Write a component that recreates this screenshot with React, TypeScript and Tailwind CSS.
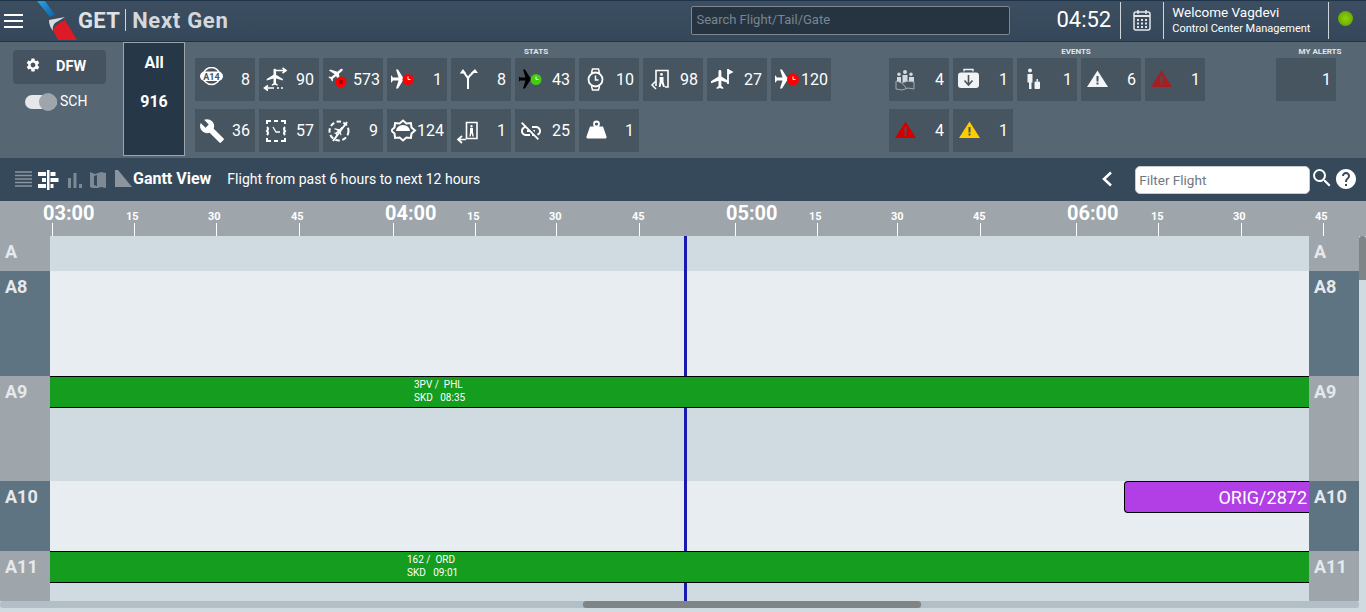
import type { ReactNode } from 'react';
import { MdBuild, MdLinkOff, MdSearch, MdSettings, MdHelp } from 'react-icons/md';

const PLANE = 'M21 16v-2l-8-5V3.500c0-.83-.67-1.500-1.500-1.500S10 2.670 10 3.500V9l-8 5v2l8-2.500V19l-2 1.500V22l3.500-1 3.500 1v-1.500L13 19v-5.500l8 2.500z';

const Svg = ({ children, size = 26 }: { children: ReactNode; size?: number }) => (
  <svg width={size} height={size} viewBox="0 0 26 26" className="shrink-0">
    {children}
  </svg>
);

const Plane = ({ rotate, fill = '#fff', x = 0, y = 0, s = 1 }: { rotate: number; fill?: string; x?: number; y?: number; s?: number }) => (
  <g transform={`translate(${x} ${y}) scale(${s}) rotate(${rotate} 12 12)`}>
    <path d={PLANE} fill={fill} />
  </g>
);

const ClockBadge = ({ color, cx, cy, r = 5.5 }: { color: string; cx: number; cy: number; r?: number }) => (
  <g>
    <circle cx={cx} cy={cy} r={r} fill={color} />
    <path d={`M${cx} ${cy - 3}v3h2.500`} stroke="#fff" strokeWidth="1" fill="none" />
  </g>
);

const Triangle = ({ color }: { color: string }) => (
  <Svg>
    <path d="M12.500 3.500 L23 20 H2 Z" fill={color} />
    <rect x="11.500" y="9" width="2" height="5.500" fill="#46555f" />
    <rect x="11.500" y="15.500" width="2" height="2" fill="#46555f" />
  </Svg>
);

const statIcons: Record<string, ReactNode> = {
  a14: (
    <Svg>
      <circle cx="12.500" cy="9" r="8.500" fill="none" stroke="#fff" strokeWidth="1.600" />
      <rect x="1" y="4.500" width="23" height="9.500" rx="4.700" fill="#fff" />
      <text x="12.500" y="12.700" textAnchor="middle" fontSize="9" fontWeight="700" fill="#46555f" fontFamily="Roboto, sans-serif">A14</text>
    </Svg>
  ),
  swap: (
    <Svg>
      <Plane rotate={0} s={0.85} x={2} y={0} />
      <path d="M13 3.500h9M19.500 1l3.500 2.500L19.500 6M11 21H2M5 18.500L1.500 21 5 23.500" stroke="#fff" strokeWidth="1.600" fill="none" />
      <path d="M14 21h2M18 21h2" stroke="#fff" strokeWidth="1.600" />
    </Svg>
  ),
  cancel: (
    <Svg>
      <Plane rotate={50} s={0.8} x={0} y={-2} />
      <circle cx="14" cy="15" r="5.500" fill="#ff0000" />
      <path d="M12.300 13.300l3.400 3.400M15.700 13.300l-3.400 3.400" stroke="#8a0000" strokeWidth="1.300" />
    </Svg>
  ),
  late: (
    <Svg>
      <Plane rotate={90} x={-3} y={0.5} />
      <ClockBadge color="#ff0000" cx={17} cy={12.5} />
    </Svg>
  ),
  fork: (
    <Svg>
      <path d="M13 22V12Q13 10.500 11.500 9L9 5.500M13 12Q13 10.500 15 8.500L18.500 5" stroke="#fff" strokeWidth="2" fill="none" />
      <path d="M8 2L4.800 6.500h6.500zM20 2l-4 4h7z" fill="#fff" />
    </Svg>
  ),
  onTime: (
    <Svg>
      <Plane rotate={90} x={-4} y={0.5} fill="#000" />
      <ClockBadge color="#44cc11" cx={17} cy={12.5} />
    </Svg>
  ),
  watch: (
    <Svg>
      <circle cx="12.500" cy="12.500" r="7" fill="none" stroke="#fff" strokeWidth="1.800" />
      <path d="M12.500 8.500v4.500h3M8.500 6l1-4h6l1 4M8.500 19l1 4h6l1-4" stroke="#fff" strokeWidth="1.500" fill="none" />
    </Svg>
  ),
  doorIn: (
    <Svg>
      <path d="M9 19V3.500h12V20h-3" stroke="#fff" strokeWidth="1.600" fill="none" />
      <path d="M14.500 6a1.400 1.400 0 110 2.800 1.400 1.400 0 010-2.800zM12.500 10h4v5l1.500 5h-1.800l-1.700-4-1 4h-1.800l1-6z" fill="#fff" />
      <path d="M9 14l-4 4 4 4" stroke="#fff" strokeWidth="1.500" fill="none" />
    </Svg>
  ),
  flag: (
    <Svg>
      <Plane rotate={0} s={0.95} x={-2} y={1} />
      <path d="M17 2v15" stroke="#fff" strokeWidth="1.800" />
      <path d="M17 2l5.500 3L17 8z" fill="#fff" />
    </Svg>
  ),
  late2: (
    <Svg>
      <Plane rotate={90} x={-3} y={0.5} />
      <ClockBadge color="#ff0000" cx={18} cy={12.5} r={6} />
    </Svg>
  ),
  dashClock: (
    <Svg>
      <path d="M4 6V3h4M18 3h4v3M4 20v3h4M18 23h4v-3M11 3h4M11 23h4M4 9q2 2 0 4q2 2 0 4M22 9q-2 2 0 4q-2 2 0 4" fill="none" stroke="#fff" strokeWidth="2" />
      <path d="M10 9l3 5h4" stroke="#fff" strokeWidth="1.300" fill="none" />
    </Svg>
  ),
  noPlane: (
    <Svg>
      <circle cx="12" cy="13" r="9.500" fill="none" stroke="#fff" strokeWidth="2" strokeDasharray="4.500 2.500" />
      <Plane rotate={45} s={0.5} x={6} y={7} />
      <path d="M20 4L6 23" stroke="#fff" strokeWidth="2" />
    </Svg>
  ),
  dome: (
    <Svg>
      <path d="M12 2.500l3.400 2.900 4.500-.4.600 4.400 3.500 3.100-3.500 3.100-.6 4.400-4.500-.4L12 22.500l-3.400-2.900-4.500.4-.6-4.400L0 12.500l3.500-3.100.6-4.400 4.500.4z" fill="none" stroke="#fff" strokeWidth="2" />
      <path d="M5 13a7 6 0 0114 0z" fill="#fff" />
    </Svg>
  ),
  doorOut: (
    <Svg>
      <path d="M11.500 4.500h10.500v16H11.500z" stroke="#fff" strokeWidth="1.600" fill="none" />
      <path d="M16.500 7a1.200 1.200 0 110 2.400 1.200 1.200 0 010-2.400zM15 10h3v4l.8 4.500h-1.300L16.500 15l-.8 3.500h-1.300l.6-4.500z" fill="#fff" />
      <path d="M11 21.500H3M7 18l-4 3.500L7 25" stroke="#fff" strokeWidth="1.700" fill="none" />
    </Svg>
  ),
  weight: (
    <Svg>
      <circle cx="13.500" cy="6" r="2.500" fill="none" stroke="#fff" strokeWidth="1.800" />
      <path d="M7 8.500h13l3.500 10a1.500 1.500 0 01-1.500 2H5a1.500 1.500 0 01-1.500-2z" fill="#fff" />
    </Svg>
  ),
};

const eventIcons: Record<string, ReactNode> = {
  crowd: (
    <Svg>
      <path d="M6 5.500a1.800 1.800 0 110 3.600 1.800 1.800 0 010-3.600zM12 3a2 2 0 110 4 2 2 0 010-4zM18 5.500a1.800 1.800 0 110 3.600 1.800 1.800 0 010-3.600z" fill="#d5d9dc" />
      <path d="M4 10h4v5H4zM9.500 8h5v7h-5zM16 10h5v5h-5z" fill="#d5d9dc" />
      <path d="M3 14l6 2 6-2 6 1v7l-6-1-6 2-6-1zM9 16l5 6" fill="none" stroke="#a3aab0" strokeWidth="1" />
    </Svg>
  ),
  bag: (
    <Svg>
      <rect x="1" y="5.500" width="21" height="15.500" rx="3" fill="#f2f3f4" />
      <path d="M7 4.500V2.500h9v2" stroke="#f2f3f4" strokeWidth="1.300" fill="none" />
      <path d="M11.500 8v10M7.500 13.500l4 4.500 4-4.500" stroke="#46555f" strokeWidth="1.600" fill="none" />
    </Svg>
  ),
  person: (
    <Svg>
      <path d="M9 1.500a2 2 0 110 4 2 2 0 010-4zM6.500 7h5v8.500h-1V22H8v-6.500H6.500z" fill="#f2f3f4" />
      <rect x="13.500" y="14.500" width="5.500" height="7.500" rx="1" fill="#f2f3f4" />
      <rect x="15.500" y="12" width="1.500" height="2.500" fill="#f2f3f4" />
    </Svg>
  ),
  white: <Triangle color="#f4f5f6" />,
  darkRed: <Triangle color="#a61e22" />,
  red: <Triangle color="#d40000" />,
  yellow: <Triangle color="#ffcc00" />,
};

const statRows = [
  [
    { icon: statIcons.a14, n: '8' },
    { icon: statIcons.swap, n: '90' },
    { icon: statIcons.cancel, n: '573' },
    { icon: statIcons.late, n: '1' },
    { icon: statIcons.fork, n: '8' },
    { icon: statIcons.onTime, n: '43' },
    { icon: statIcons.watch, n: '10' },
    { icon: statIcons.doorIn, n: '98' },
    { icon: statIcons.flag, n: '27' },
    { icon: statIcons.late2, n: '120' },
  ],
  [
    { icon: <MdBuild size={26} className="text-white shrink-0" />, n: '36' },
    { icon: statIcons.dashClock, n: '57' },
    { icon: statIcons.noPlane, n: '9' },
    { icon: statIcons.dome, n: '124' },
    { icon: statIcons.doorOut, n: '1' },
    { icon: <MdLinkOff size={24} className="text-white shrink-0" />, n: '25' },
    { icon: statIcons.weight, n: '1' },
  ],
];

const eventRows = [
  [
    { icon: eventIcons.crowd, n: '4' },
    { icon: eventIcons.bag, n: '1' },
    { icon: eventIcons.person, n: '1' },
    { icon: eventIcons.white, n: '6' },
    { icon: eventIcons.darkRed, n: '1' },
  ],
  [
    { icon: eventIcons.red, n: '4' },
    { icon: eventIcons.yellow, n: '1' },
  ],
];

const ruler = [
  { t: '03:00', w: 'w-[82px]', cls: 'ml-[-9px] text-[20px] leading-[22px]' },
  { t: '15', w: 'w-[82px]', cls: 'ml-[-8px] text-[11px] leading-[14px]' },
  { t: '30', w: 'w-[83px]', cls: 'ml-[-8px] text-[11px] leading-[14px]' },
  { t: '45', w: 'w-[94px]', cls: 'ml-[-8px] text-[11px] leading-[14px]' },
  { t: '04:00', w: 'w-[82px]', cls: 'ml-[-8px] text-[20px] leading-[22px]' },
  { t: '15', w: 'w-[81px]', cls: 'ml-[-8px] text-[11px] leading-[14px]' },
  { t: '30', w: 'w-[83px]', cls: 'ml-[-7px] text-[11px] leading-[14px]' },
  { t: '45', w: 'w-[96px]', cls: 'ml-[-7px] text-[11px] leading-[14px]' },
  { t: '05:00', w: 'w-[82px]', cls: 'ml-[-9px] text-[20px] leading-[22px]' },
  { t: '15', w: 'w-[80px]', cls: 'ml-[-8px] text-[11px] leading-[14px]' },
  { t: '30', w: 'w-[83px]', cls: 'ml-[-6px] text-[11px] leading-[14px]' },
  { t: '45', w: 'w-[96px]', cls: 'ml-[-7px] text-[11px] leading-[14px]' },
  { t: '06:00', w: 'w-[82px]', cls: 'ml-[-9px] text-[20px] leading-[22px]' },
  { t: '15', w: 'w-[83px]', cls: 'ml-[-7px] text-[11px] leading-[14px]' },
  { t: '30', w: 'w-[82px]', cls: 'ml-[-8px] text-[11px] leading-[14px]' },
  { t: '45', w: 'w-[43px]', cls: 'ml-[-8px] text-[11px] leading-[14px]' },
];

function Tile({ icon, n }: { icon?: ReactNode; n: string }) {
  return (
    <div className="w-[60px] h-[43px] bg-[#46555f] flex items-center justify-between pl-[4px] pr-[5px]">
      <span className="flex items-center">{icon}</span>
      <span className="text-white text-[16px] leading-none">{n}</span>
    </div>
  );
}

function TileRows({ rows }: { rows: { icon?: ReactNode; n: string }[][] }) {
  return (
    <div className="flex flex-col gap-[8px]">
      {rows.map((row, i) => (
        <div key={i} className="flex gap-[4px]">
          {row.map((t, j) => (
            <Tile key={j} icon={t.icon} n={t.n} />
          ))}
        </div>
      ))}
    </div>
  );
}

function GateRow({ name, height, dark, children }: { name: string; height: string; dark: boolean; children?: ReactNode }) {
  const label = `w-[50px] shrink-0 pl-[5px] pt-[4px] text-[18px] leading-[24px] font-bold text-[#e6e9ec] ${dark ? 'bg-[#5f7482]' : 'bg-[#9ea5ab]'}`;
  return (
    <div className={`flex shrink-0 ${height}`}>
      <div className={label}>{name}</div>
      <div className={`flex-1 min-w-0 ${dark ? 'bg-[#e7edf0]' : 'bg-[#cfdbe0]'}`}>{children}</div>
      <div className={label}>{name}</div>
    </div>
  );
}

function GreenBar({ line1, line2, offset }: { line1: string; line2: string; offset: string }) {
  return (
    <div className="relative z-10 h-[32px] pb-[2px] bg-[#159d1f] border-y border-black flex flex-col justify-center text-white text-[10px] leading-[13px] whitespace-pre">
      <div className={offset}>{line1}</div>
      <div className={offset}>{line2}</div>
    </div>
  );
}

export default function App() {
  return (
    <div className="w-[1366px] h-[612px] overflow-hidden flex flex-col bg-[#cfdbe0] font-['Roboto',sans-serif]">
      {/* Header */}
      <header className="h-[42px] shrink-0 flex items-center pb-[2px] bg-gradient-to-b from-[#3c4e60] to-[#35475a] border-y border-[#1d3349]">
        <div className="ml-[4px] mt-[2px] w-[19px] flex flex-col gap-[4px]">
          <div className="h-[2px] bg-white" />
          <div className="h-[2px] bg-white" />
          <div className="h-[2px] bg-white" />
        </div>
        <svg width="42" height="40" viewBox="0 0 42 40" className="ml-[12px] mt-[2px] shrink-0">
          <defs>
            <linearGradient id="logoBlue" x1="0" y1="0" x2="1" y2="1">
              <stop offset="0" stopColor="#2aa5e0" />
              <stop offset="1" stopColor="#0f5fa8" />
            </linearGradient>
          </defs>
          <path d="M2 0h8l10 14-5 2z" fill="url(#logoBlue)" />
          <path d="M14 19l16-3-10 6q-3 3-2 8q-4-5-4-11z" fill="#d8dadc" />
          <path d="M18 29q2-5 12-10l12 20H23z" fill="#dd1a25" />
        </svg>
        <span className="ml-[1px] text-[22px] font-bold text-[#dfe2e5] tracking-[0.3px]">GET</span>
        <div className="ml-[5px] w-px h-[22px] bg-[#cfd5da]" />
        <span className="ml-[6px] text-[22px] font-bold text-[#d4d8dc] tracking-[0.7px]">Next Gen</span>
        <div className="ml-[463px] w-[319px] h-[29px] bg-[#263442] border border-[#7d8790] rounded-[2px] flex items-center pl-[4px] text-[13px] text-[#7a858e]">
          Search Flight/Tail/Gate
        </div>
        <span className="ml-[46px] text-[22px] text-white leading-none">04:52</span>
        <div className="ml-[9px] w-px h-[37px] bg-[#cfd5da]" />
        <svg width="18" height="22" viewBox="0 0 18 22" className="ml-[12px] shrink-0">
          <rect x="1" y="3" width="16" height="18" rx="2" fill="none" stroke="#e3e6e9" strokeWidth="1.500" />
          <path d="M1 7h16" stroke="#e3e6e9" strokeWidth="2" />
          <path d="M5 1v4M13 1v4" stroke="#e3e6e9" strokeWidth="1.500" />
          <path d="M4 10h2v2H4zM8 10h2v2H8zM12 10h2v2h-2zM4 13.500h2v2H4zM8 13.500h2v2H8zM12 13.500h2v2h-2zM4 17h2v2H4zM8 17h2v2H8zM12 17h2v2h-2z" fill="#e3e6e9" />
        </svg>
        <div className="ml-[12px] w-px h-[37px] bg-[#cfd5da]" />
        <div className="ml-[8px] w-[156px] flex flex-col text-white">
          <span className="text-[13.5px] leading-[17px]">Welcome Vagdevi</span>
          <span className="text-[11px] leading-[15px]">Control Center Management</span>
        </div>
        <div className="w-px h-[37px] bg-[#cfd5da]" />
        <div className="ml-[9px] -mt-[4px] w-[15px] h-[15px] rounded-full bg-[radial-gradient(circle,#8fd400,#5a9a0c)]" />
      </header>

      {/* Stats panel */}
      <section className="h-[116px] shrink-0 flex bg-[#566673]">
        <div className="w-[123px] shrink-0 flex flex-col items-start pl-[13px] pt-[8px]">
          <div className="w-[93px] h-[34px] bg-[#44535f] rounded-[4px] flex items-center text-white font-bold text-[14.5px]">
            <MdSettings size={16} className="ml-[12px] -mt-[5px]" />
            <span className="ml-[15px]">DFW</span>
          </div>
          <div className="mt-[7px] ml-[12px] flex items-center">
            <div className="w-[32px] h-[14px] rounded-full bg-[#e5e7ea] flex items-center justify-end">
              <div className="w-[18px] h-[18px] rounded-full bg-[#9ea5ab]" />
            </div>
            <span className="ml-[3px] text-[14px] text-white">SCH</span>
          </div>
        </div>
        <div className="w-[62px] h-[114px] shrink-0 bg-[#263847] border border-[#9ea5ab] flex flex-col items-center text-white font-bold text-[16px] leading-none pt-[12px]">
          <span>All</span>
          <span className="mt-[23px]">916</span>
        </div>
        <div className="w-[682px] ml-[10px] shrink-0 flex flex-col">
          <div className="h-[16px] pt-[5px] text-center text-[8px] leading-[10px] font-bold text-[#e3e6e9]">STATS</div>
          <TileRows rows={statRows} />
        </div>
        <div className="w-[374px] ml-[12px] shrink-0 flex flex-col">
          <div className="h-[16px] pt-[5px] text-center text-[8px] leading-[10px] font-bold text-[#e3e6e9]">EVENTS</div>
          <TileRows rows={eventRows} />
        </div>
        <div className="w-[88px] ml-[13px] shrink-0 flex flex-col">
          <div className="h-[16px] pt-[5px] text-center text-[8px] leading-[10px] font-bold text-[#e3e6e9]">MY ALERTS</div>
          <TileRows rows={[[{ n: '1' }]]} />
        </div>
      </section>

      {/* Toolbar */}
      <div className="h-[43px] shrink-0 flex items-center bg-[#36495b]">
        <svg width="18" height="17" viewBox="0 0 18 17" className="ml-[15px] shrink-0">
          <path d="M0 1h17M0 4.500h17M0 8h17M0 11.500h17M0 15h17" stroke="#8a959f" strokeWidth="1.600" />
        </svg>
        <svg width="21" height="20" viewBox="0 0 21 20" className="ml-[5px] shrink-0">
          <path d="M9 0h2.500v20H9zM0 2h8v4H0zM12.500 2h5v4h-5zM4 8h4v4H4zM12.500 8h8v4h-8zM0 14h8v4H0zM12.500 14h3v4h-3z" fill="#fff" />
        </svg>
        <svg width="14" height="17" viewBox="0 0 14 17" className="ml-[9px] shrink-0">
          <path d="M0 7h3v10H0zM5.500 2h3v15h-3zM11 13h3v4h-3z" fill="#7d8a95" />
        </svg>
        <svg width="16" height="17" viewBox="0 0 16 17" className="ml-[8px] shrink-0">
          <path d="M0 1l5 2 6-2 5 1v15l-5-1-6 2-5-2zM4 5v9l3 1V4z" fill="#7d8a95" fillRule="evenodd" />
        </svg>
        <svg width="17" height="17" viewBox="0 0 17 17" className="ml-[9px] shrink-0 -mt-[2px]">
          <path d="M0 0h3l14 17H0z" fill="#8a959f" />
        </svg>
        <span className="ml-[1px] pb-[2px] text-[16px] font-bold text-white">Gantt View</span>
        <span className="ml-[16px] text-[14px] text-white">Flight from past 6 hours to next 12 hours</span>
        <svg width="12" height="16" viewBox="0 0 12 16" className="ml-[621px] shrink-0 -mt-[2px]">
          <path d="M10 1.500L3 8l7 6.500" stroke="#fff" strokeWidth="2.500" fill="none" />
        </svg>
        <div className="ml-[22px] w-[175px] h-[28px] pt-[1px] bg-white border border-[#c5ccd2] rounded-[5px] flex items-center pl-[3px] text-[13.5px] text-[#6f7880]">
          Filter Flight
        </div>
        <MdSearch size={24} className="-mt-[3px] text-white shrink-0" />
        <MdHelp size={24} className="-mt-[2px] text-white shrink-0" />
      </div>

      {/* Time ruler */}
      <div className="h-[35px] shrink-0 flex pl-[52px] overflow-hidden bg-[#9ea5ab]">
        {ruler.map((r, i) => (
          <div key={i} className={`${r.w} shrink-0 h-full flex flex-col justify-end`}>
            <span className={`${r.cls} font-bold text-white`}>{r.t}</span>
            <div className="w-px h-[13px] mt-[-1px] bg-white" />
          </div>
        ))}
      </div>

      {/* Gantt rows */}
      <div className="h-[365px] shrink-0 flex">
        <div className="relative flex-1 min-w-0 flex flex-col overflow-hidden">
          <div className="absolute left-[684px] top-0 bottom-0 w-[3px] bg-[#1a1ab0] z-[5]" />
          <GateRow name="A" height="h-[35px]" dark={false} />
          <GateRow name="A8" height="h-[105px]" dark />
          <GateRow name="A9" height="h-[105px]" dark={false}>
            <GreenBar line1="3PV /  PHL" line2="SKD   08:35" offset="ml-[364px]" />
          </GateRow>
          <GateRow name="A10" height="h-[70px]" dark>
            <div className="relative z-10 h-[32px] ml-[1074px] bg-[#b23fe6] border border-r-0 border-black rounded-l-[4px] flex items-center justify-end pr-[2px] text-white text-[18px]">
              ORIG/2872
            </div>
          </GateRow>
          <GateRow name="A11" height="h-[50px]" dark={false}>
            <GreenBar line1="162 /  ORD" line2="SKD   09:01" offset="ml-[357px]" />
          </GateRow>
        </div>
        <div className="w-[7px] shrink-0 bg-[#cfdbe0]">
          <div className="h-[44px] bg-[#7f8487] rounded-t-[3px]" />
        </div>
      </div>

      {/* Horizontal scrollbar */}
      <div className="h-[7px] w-[1359px] shrink-0 bg-[#b3bfc6] rounded-[3px]">
        <div className="ml-[583px] w-[338px] h-full rounded-[3px] bg-[#7f8487]" />
      </div>
    </div>
  );
}
